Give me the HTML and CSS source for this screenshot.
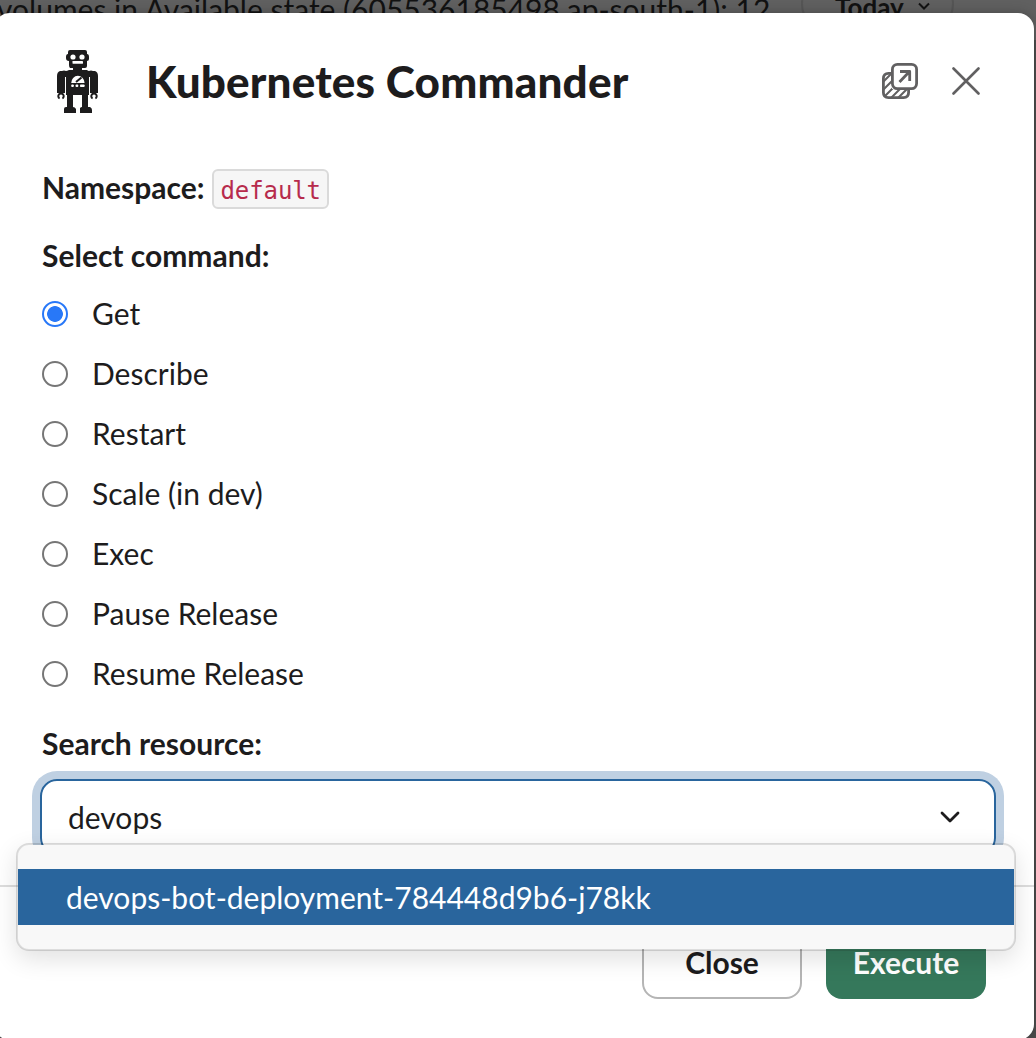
FILE: index.html
```html
<!DOCTYPE html>
<html lang="en">
<head>
<meta charset="utf-8">
<title>Kubernetes Commander</title>
<link rel="stylesheet" href="styles.css">
</head>
<body>
<div class="channel">
  <p class="message">volumes in Available state (605536185498,ap-south-1): 12</p>
  <div class="day-pill">Today
    <svg class="day-caret" viewBox="0 0 14 8"><path d="M2 1.5 7 6.5 12 1.5"/></svg>
  </div>
</div>
<main class="modal">
  <header class="header">
    <svg class="robot" viewBox="0 0 42 65">
      <path fill="#1d1c1d" d="M11 3Q11 1 13 1H28Q30 1 30 3V5Q32 5 32 8V10Q32 12 30 12V17Q30 19 28 19H25V21H30Q31 22 32 22Q34 21 36 22H38Q41 23 41 27V44H33V28H32V46H31V58H33Q35 59 35 61V64H23V59Q24 58 25 58V46H16V58Q18 58 19 60V64H7V60Q7 58 9 58H10V46H9V28H8V44H0V27Q0 23 3 22H5Q7 21 9 22Q10 22 12 21H16V19H13Q12 18 12 16V12Q9 12 9 9V8Q9 5 11 5Z"/>
      <g fill="#fff"><circle cx="16" cy="8" r="2.6"/><circle cx="25" cy="8" r="2.6"/><rect x="15.5" y="12" width="10.5" height="2.7" rx=".4"/><path d="M14.2 34a6.5 7 0 0 1 13.400 0Z"/><rect x="14.2" y="35.5" width="2.7" height="2.5" rx="1"/><rect x="18.5" y="35.5" width="2.8" height="2.5" rx="1"/><rect x="23" y="35.5" width="4.6" height="2.5" rx=".8"/></g>
      <path d="m19 33 5.500-4.500" stroke="#1d1c1d" stroke-width="2"/>
      <path fill="none" stroke="#1d1c1d" stroke-width="2" d="M2.600 49.500A2.700 2.700 0 1 1 5.400 49.500M35.600 49.500A2.700 2.700 0 1 1 38.400 49.500"/>
    </svg>
    <h1 class="title">Kubernetes Commander</h1>
    <svg class="popout" viewBox="0 0 36 36">
      <defs><clipPath id="back"><path d="M1 10H10V26H26V35H1Z"/></clipPath></defs>
      <path class="hatch" clip-path="url(#back)" d="M0 20 10 10M1 27 13 15M3 33 17 19M9 35 23 21M16 35 29 22"/>
      <path class="line" d="M9 10.4H6.5Q1.4 10.4 1.4 15.5V29.5Q1.4 34.6 6.5 34.6H21.5Q26.6 34.6 26.6 29.5V27"/>
      <rect class="line" x="10.4" y="1.4" width="24.2" height="24.2" rx="5"/>
      <path class="line" d="M17.500 19 27.500 8.500M18 8.500H27.700V18"/>
    </svg>
    <svg class="dismiss" viewBox="0 0 28 28"><path d="M1.5 1.5 26.5 26.5M26.5 1.5 1.5 26.5"/></svg>
  </header>
  <section class="body">
    <p class="namespace"><b class="namespace-label">Namespace:</b><code class="code">default</code></p>
    <h2 class="label label-command">Select command:</h2>
    <div class="options">
      <label class="option"><input class="radio" type="radio" name="command" checked><span class="option-text">Get</span></label>
      <label class="option"><input class="radio" type="radio" name="command"><span class="option-text">Describe</span></label>
      <label class="option"><input class="radio" type="radio" name="command"><span class="option-text">Restart</span></label>
      <label class="option"><input class="radio" type="radio" name="command"><span class="option-text">Scale (in dev)</span></label>
      <label class="option"><input class="radio" type="radio" name="command"><span class="option-text">Exec</span></label>
      <label class="option"><input class="radio" type="radio" name="command"><span class="option-text">Pause Release</span></label>
      <label class="option"><input class="radio" type="radio" name="command"><span class="option-text">Resume Release</span></label>
    </div>
    <h2 class="label label-search">Search resource:</h2>
    <div class="select">
      <span>devops</span>
      <svg class="caret" viewBox="0 0 20 13"><path d="M2 2 10 10 18 2"/></svg>
      <div class="menu"><div class="menu-item">devops-bot-deployment-784448d9b6-j78kk</div></div>
    </div>
  </section>
  <footer class="footer">
    <button class="button">Close</button>
    <button class="button button-primary">Execute</button>
  </footer>
</main>
</body>
</html>
```
FILE: styles.css
```css
* { box-sizing: border-box; }
body {
  margin: 0;
  width: 1036px;
  height: 1038px;
  position: relative;
  overflow: hidden;
  background: #4d4d4d;
  color: #1d1c1d;
  font-family: Lato, sans-serif;
  font-size: 30px;
}
h1, h2, p { margin: 0; }
svg { display: block; flex: none; }

.channel {
  display: flex;
  height: 40px;
  background: #606060;
  color: #121212;
}
.message {
  width: 801px;
  margin-top: -11px;
  line-height: 40px;
  white-space: nowrap;
  text-indent: -3px;
}
.day-pill {
  display: flex;
  width: 153px;
  height: 56px;
  margin-top: -24px;
  padding: 13px 0 0 32px;
  border: 2px solid #555;
  border-radius: 28px;
  font-size: 26px;
  font-weight: 700;
  line-height: 32px;
}
.day-caret {
  width: 14px;
  height: 8px;
  margin: 11px 0 0 13px;
  fill: none;
  stroke: #121212;
  stroke-width: 2;
}

.modal {
  position: absolute;
  left: -6px;
  top: 13px;
  width: 1040px;
  height: 1027px;
  background: #fff;
  border-radius: 16px;
  box-shadow: 0 0 12px rgba(0, 0, 0, .25);
}
.header {
  display: flex;
  align-items: center;
  height: 136px;
  padding: 0 54px 0 63px;
}
.robot { width: 42px; height: 65px; }
.title {
  flex: 1;
  margin-left: 47px;
  font-size: 44px;
  font-weight: 900;
  letter-spacing: .18px;
  line-height: 56px;
}
.popout { width: 36px; height: 36px; }
.line, .hatch { fill: none; stroke: #616061; stroke-width: 2.8; stroke-linejoin: round; }
.hatch { stroke-width: 2; }
.dismiss {
  width: 28px;
  height: 28px;
  margin-left: 34px;
  fill: none;
  stroke: #616061;
  stroke-width: 2.6;
  stroke-linecap: round;
}

.body {
  height: 736px;
  padding: 20px 38px 0 46px;
}
.namespace {
  display: flex;
  align-items: center;
  height: 40px;
  margin-left: 2px;
}
.namespace-label { padding-bottom: 4px; }
.code {
  width: 117px;
  height: 40px;
  margin-left: 8px;
  padding: 0 6px;
  border: 2px solid #dadada;
  border-radius: 6px;
  background: #f6f6f6;
  color: #b72b4c;
  font-family: "DejaVu Sans Mono", monospace;
  font-size: 24px;
  letter-spacing: -.1px;
  line-height: 40px;
}
.label {
  margin-left: 2px;
  font-size: 30px;
  font-weight: 700;
  line-height: 40px;
}
.label-command { margin-top: 26px; }
.options { margin: 9px 0 0 2px; }
.option {
  display: flex;
  align-items: center;
  gap: 24px;
  height: 60px;
}
.option-text { padding-bottom: 2px; }
.radio {
  appearance: none;
  width: 26px;
  height: 26px;
  margin: 0;
  border: 2px solid #767676;
  border-radius: 50%;
}
.radio:checked {
  border-color: #2878f8;
  background: radial-gradient(circle, #2878f8 7.5px, transparent 8.2px);
}
.label-search { margin-top: 19px; }
.select {
  position: relative;
  display: flex;
  align-items: center;
  justify-content: space-between;
  width: 956px;
  height: 76px;
  margin-top: 16px;
  padding: 0 34px 0 26px;
  border: 2px solid #29659d;
  border-radius: 17px;
  box-shadow: 0 0 0 8px #bfd0e2;
}
.caret {
  width: 20px;
  height: 13px;
  fill: none;
  stroke: #1d1c1d;
  stroke-width: 2.8;
  stroke-linecap: round;
  stroke-linejoin: round;
}
.menu {
  position: absolute;
  left: -26px;
  top: 62px;
  z-index: 1;
  width: 1000px;
  height: 108px;
  padding: 24px 0;
  border: 2px solid rgba(29, 28, 29, .15);
  border-radius: 13px;
  background: #f8f8f8;
  background-clip: padding-box;
  box-shadow: 0 8px 24px rgba(0, 0, 0, .12);
}
.menu-item {
  height: 56px;
  padding-left: 48px;
  background: #29659d;
  color: #fff;
  line-height: 57px;
}
.footer {
  display: flex;
  justify-content: flex-end;
  gap: 24px;
  height: 155px;
  padding: 40px 48px 0 0;
  border-top: 2px solid #ddd;
}
.button {
  width: 160px;
  height: 72px;
  padding: 0 0 2px;
  border: 2px solid #b5b5b5;
  border-radius: 16px;
  background: #fff;
  color: #1d1c1d;
  font-family: inherit;
  font-size: 30px;
  font-weight: 700;
}
.button-primary {
  border: 0;
  background: #35785b;
  color: #fff;
}
```
